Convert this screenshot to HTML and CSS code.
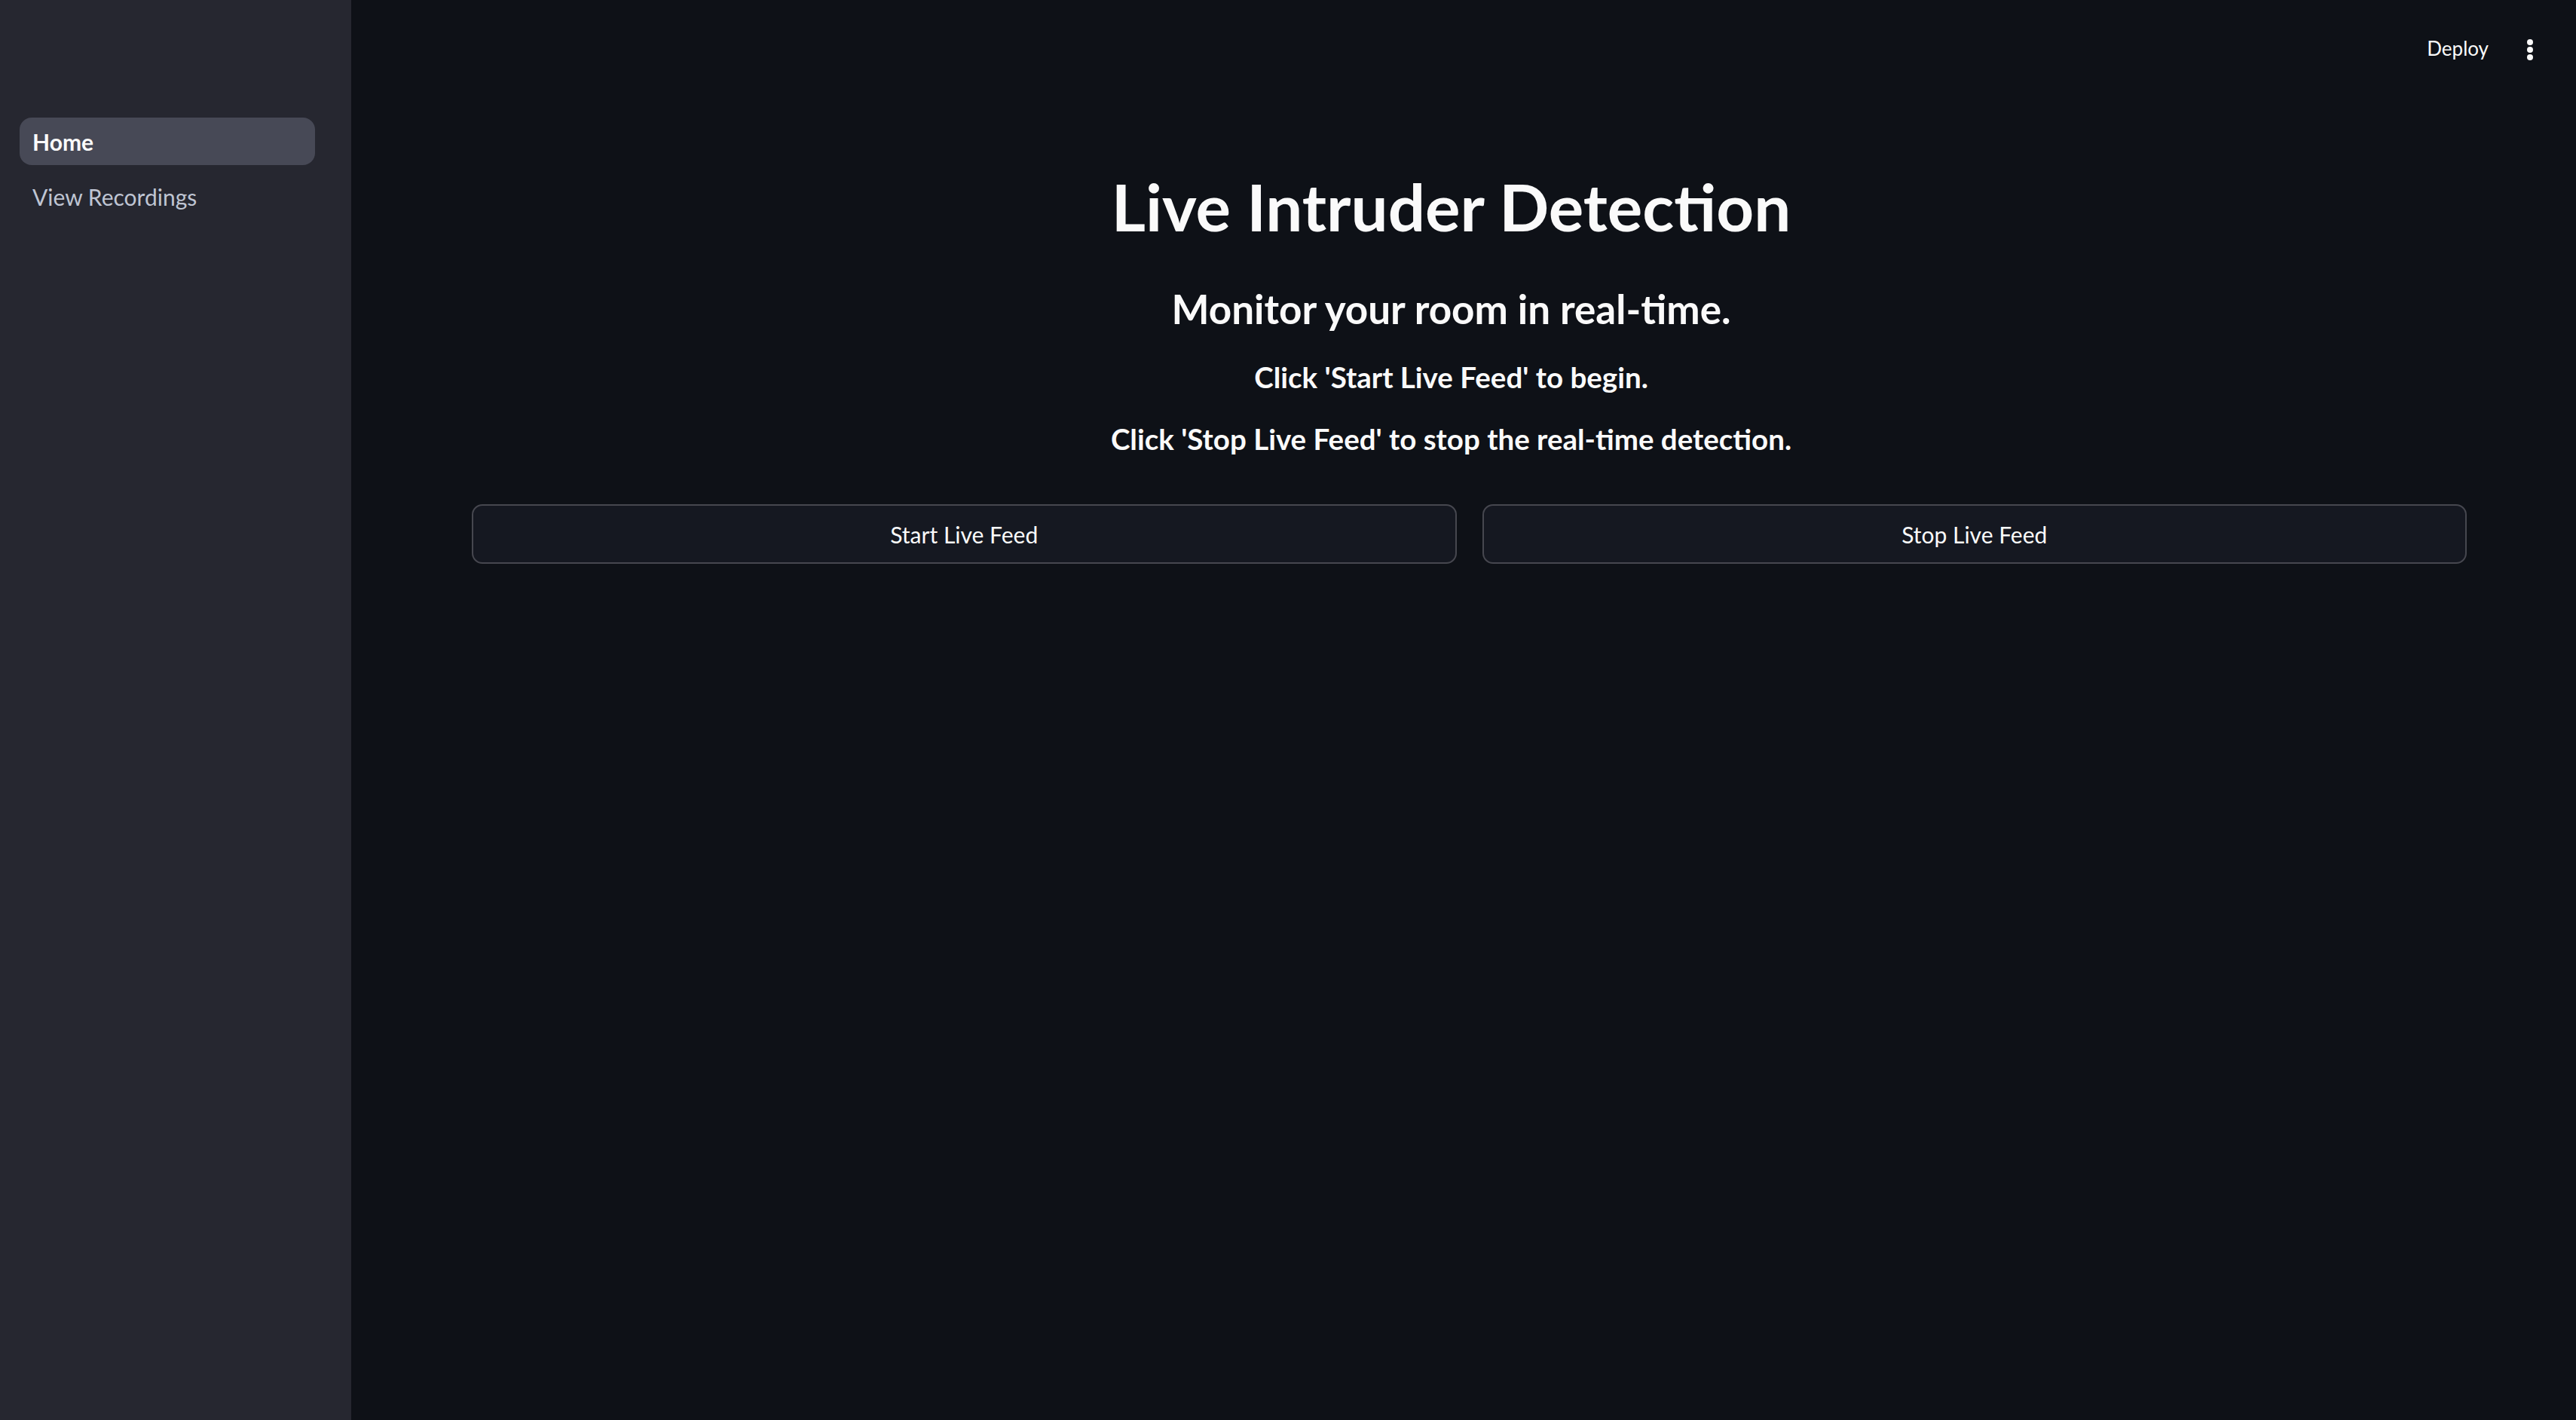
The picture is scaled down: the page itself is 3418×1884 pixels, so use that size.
FILE: index.html
```html
<!DOCTYPE html>
<html lang="en">
<head>
<meta charset="utf-8">
<title>Live Intruder Detection</title>
<link rel="stylesheet" href="styles.css">
</head>
<body>
<div class="app">
  <aside class="sidebar">
    <nav class="nav">
      <a class="nav-item active">Home</a>
      <a class="nav-item">View Recordings</a>
    </nav>
  </aside>
  <main class="main">
    <header class="topbar">
      <span class="deploy">Deploy</span>
      <span class="menu" aria-label="menu">
        <svg width="10" height="30" viewBox="0 0 10 30"><circle cx="5" cy="4" r="4" fill="#fafafa"/><circle cx="5" cy="14" r="4" fill="#fafafa"/><circle cx="5" cy="24" r="4" fill="#fafafa"/></svg>
      </span>
    </header>
    <section class="block">
      <div class="intro">
        <h1 class="title">Live Intruder Detection</h1>
        <h3 class="subtitle">Monitor your room in real-time.</h3>
        <p class="hint hint-first">Click 'Start Live Feed' to begin.</p>
        <p class="hint hint-second">Click 'Stop Live Feed' to stop the real-time detection.</p>
      </div>
      <div class="buttons">
        <button class="btn">Start Live Feed</button>
        <button class="btn">Stop Live Feed</button>
      </div>
    </section>
  </main>
</div>
</body>
</html>
```

FILE: styles.css
```css
html, body {
  margin: 0;
  padding: 0;
  height: 100%;
  background: #0e1117;
  color: #fafafa;
  font-family: Lato, "Noto Sans", sans-serif;
}

.app {
  display: flex;
  height: 100vh;
}

.sidebar {
  width: 466px;
  flex: none;
  background: #262730;
  box-sizing: border-box;
  padding: 156px 48px 0 26px;
}

.nav {
  display: flex;
  flex-direction: column;
  gap: 10px;
}

.nav-item {
  display: flex;
  align-items: center;
  height: 63px;
  padding-left: 17px;
  border-radius: 16px;
  font-size: 30px;
  line-height: 1.2;
  color: #bfc5d3;
}

.nav-item.active {
  background: #474956;
  color: #fafafa;
  font-weight: 700;
}

.main {
  flex: 1;
  display: flex;
  flex-direction: column;
}

.topbar {
  display: flex;
  justify-content: flex-end;
  align-items: flex-start;
  padding: 49px 56px 0 0;
  height: 0;
}

.deploy {
  font-size: 26px;
  line-height: 1.2;
  margin-right: 50px;
}

.menu {
  display: block;
  margin-top: 3px;
}

.block {
  padding: 173px 145px 0 160px;
}

.intro {
  padding-right: 48px;
  text-align: center;
}

.title {
  margin: 0;
  font-size: 87px;
  line-height: 1.2;
  font-weight: 700;
}

.subtitle {
  margin: 52px 0 0;
  font-size: 53px;
  line-height: 1.2;
  font-weight: 700;
}

.hint {
  margin: 0;
  font-size: 38.5px;
  line-height: 1.2;
  font-weight: 700;
}

.hint-first {
  margin-top: 35px;
}

.hint-second {
  margin-top: 36px;
}

.buttons {
  display: grid;
  grid-template-columns: 1fr 1fr;
  gap: 34px;
  margin-top: 64px;
}

.btn {
  height: 79px;
  box-sizing: border-box;
  border: 2px solid #46474f;
  border-radius: 14px;
  background: #151821;
  color: #fafafa;
  font-family: Lato, "Noto Sans", sans-serif;
  font-size: 30px;
  line-height: 1.2;
  display: flex;
  align-items: center;
  justify-content: center;
}
```
